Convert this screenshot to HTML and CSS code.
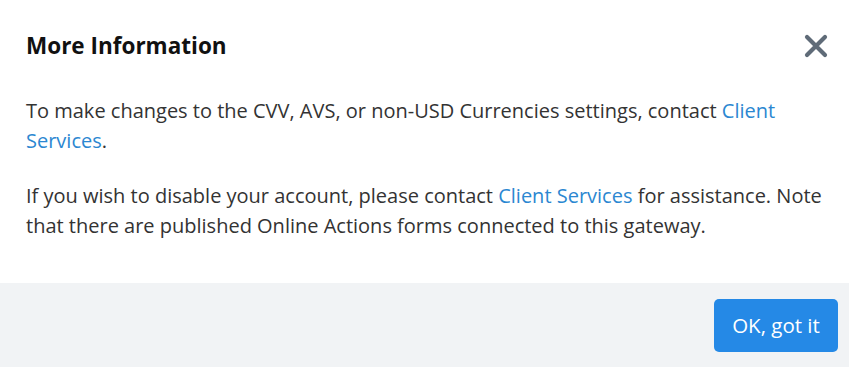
FILE: index.html
```html
<!DOCTYPE html>
<html lang="en">

<head>
    <meta charset="UTF-8">
    <meta name="viewport" content="width=device-width, initial-scale=1.0">
    <title>More Information</title>
    <link rel="stylesheet" href="styles.css">
</head>

<body>
    <div class="modal">
        <div class="modal-header">
            <h2>More Information</h2>
            <button class="close" aria-label="Close">
                <svg width="24" height="24" viewBox="0 0 24 24">
                    <path d="M3 3 L21 21 M21 3 L3 21" stroke="#5f6b78" stroke-width="4.2" stroke-linecap="round" fill="none" />
                </svg>
            </button>
        </div>
        <div class="modal-body">
            <p>To make changes to the CVV, AVS, or non-USD Currencies settings, contact <a href="#">Client Services</a>.</p>
            <p>If you wish to disable your account, please contact <a href="#">Client Services</a> for assistance. Note that there are published Online Actions forms connected to this gateway.</p>
        </div>
        <div class="modal-footer">
            <button class="btn-primary">OK, got it</button>
        </div>
    </div>
</body>

</html>
```

FILE: styles.css
```css
body {
    margin: 0;
    font-family: "Open Sans", "Noto Sans", sans-serif;
    background: #fff;
    color: #333;
}

.modal {
    width: 849px;
    height: 367px;
    display: flex;
    flex-direction: column;
}

.modal-header {
    display: flex;
    justify-content: space-between;
    align-items: center;
    padding: 31px 21px 0 26px;
}

.modal-header h2 {
    margin: 0;
    font-size: 22.5px;
    line-height: 30px;
    font-weight: 700;
    color: #111;
}

.close {
    background: none;
    border: none;
    padding: 0;
    cursor: pointer;
    display: flex;
}

.modal-body {
    padding: 35px 26px 0;
    flex: 1;
}

.modal-body p {
    margin: 0 0 25px;
    font-size: 20px;
    line-height: 30px;
}

.modal-body a {
    color: #2b87d1;
    text-decoration: none;
}

.modal-footer {
    background: #f1f3f5;
    height: 84px;
    flex-shrink: 0;
    display: flex;
    justify-content: flex-end;
    align-items: center;
    padding: 0 11px;
}

.btn-primary {
    background: #2589e6;
    color: #fff;
    border: none;
    border-radius: 5px;
    font-family: inherit;
    font-size: 20.5px;
    width: 124px;
    height: 53px;
    cursor: pointer;
}
```
